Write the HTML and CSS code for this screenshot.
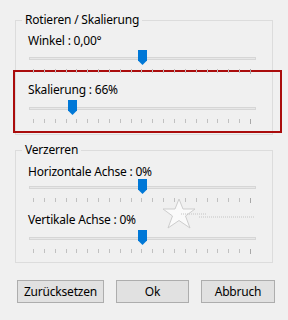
FILE: index.html
```html
<!DOCTYPE html>
<html lang="de">
<head>
  <meta charset="UTF-8">
  <title>Rotieren / Skalierung</title>
  <link rel="stylesheet" href="styles.css">
</head>
<body>
  <div class="dialog">
    <fieldset class="group">
      <legend>Rotieren / Skalierung</legend>
      <div class="label first">Winkel : 0,00°</div>
      <div class="slider s-tight">
        <div class="track"></div>
        <div class="thumb" style="left: 113px"></div>
        <div class="ticks"><i></i><i></i><i></i><i></i><i></i><i></i><i></i><i></i><i></i><i></i><i></i><i></i><i></i><i></i><i></i><i></i><i></i><i></i><i></i><i></i><i></i></div>
      </div>

      <!-- markierter Bereich -->
      <div class="focus">
        <div class="label">Skalierung : 66%</div>
        <div class="slider s-focus">
          <div class="track"></div>
          <div class="thumb" style="left: 43px"></div>
          <div class="ticks"><i></i><i></i><i></i><i></i><i></i><i></i><i></i><i></i><i></i><i></i><i></i><i></i><i></i><i></i><i></i><i></i><i></i><i></i><i></i><i></i><i></i></div>
        </div>
      </div>
    </fieldset>

    <fieldset class="group second">
      <legend>Verzerren</legend>
      <div class="label h-label">Horizontale Achse : 0%</div>
      <div class="slider s-h">
        <div class="track"></div>
        <div class="thumb" style="left: 113px"></div>
        <div class="ticks"><i></i><i></i><i></i><i></i><i></i><i></i><i></i><i></i><i></i><i></i><i></i><i></i><i></i><i></i><i></i><i></i><i></i><i></i><i></i><i></i><i></i></div>
      </div>
      <div class="label v-label">Vertikale Achse : 0%</div>
      <div class="slider s-v">
        <div class="track"></div>
        <div class="thumb" style="left: 113px"></div>
        <div class="ticks"><i></i><i></i><i></i><i></i><i></i><i></i><i></i><i></i><i></i><i></i><i></i><i></i><i></i><i></i><i></i><i></i><i></i><i></i><i></i><i></i><i></i></div>
      </div>

      <!-- Wasserzeichen -->
      <svg class="watermark" width="100" height="36" viewBox="0 0 100 36">
        <polygon points="18,2 22,12 34,12 24.5,19 29,31 18,23.5 7,31 11.5,19 2,12 14,12" fill="#fafafa" stroke="#cdcdcd" stroke-width="1"/>
        <line x1="20" y1="17" x2="46" y2="17" stroke="#c4c4c4" stroke-width="1" stroke-dasharray="1 1"/>
        <line x1="38" y1="20" x2="94" y2="20" stroke="#c4c4c4" stroke-width="1" stroke-dasharray="1 1"/>
      </svg>
    </fieldset>

    <div class="buttons">
      <button class="btn b-reset">Zurücksetzen</button>
      <button class="btn b-ok">Ok</button>
      <button class="btn b-cancel">Abbruch</button>
    </div>
  </div>
</body>
</html>
```

FILE: styles.css
```css
body {
  margin: 0;
  background-color: #f0f0f0;
  font-family: "Noto Sans", "Open Sans", sans-serif;
  font-size: 12px;
  letter-spacing: -0.2px;
  color: #000;
}
.dialog {
  width: 288px;
  height: 320px;
}
.group {
  margin: 13px 15px 0 15px;
  width: 256px;
  padding: 0 0 1px 0;
  border: 1px solid #dcdcdc;
  min-width: 0;
}
.group legend {
  margin-left: 6px;
  padding: 0 3px;
  line-height: 14px;
}
.second {
  margin-top: 8px;
  padding-bottom: 8px;
  position: relative;
}
.label {
  line-height: 16px;
  padding-left: 12px;
  white-space: nowrap;
}
.first {
  margin-top: 6px;
}
.slider {
  position: relative;
  width: 227px;
  height: 24px;
  margin-left: 13px;
}
.s-tight {
  margin-top: 1px;
}
.track {
  position: absolute;
  left: 0;
  right: 0;
  top: 7px;
  height: 3px;
  background-color: #e7e7e7;
  border: 1px solid #d6d6d6;
  box-sizing: border-box;
}
.thumb {
  position: absolute;
  top: 0;
  width: 9px;
  height: 15px;
  margin-left: -4px;
  background-color: #0078d7;
  clip-path: polygon(0 0, 100% 0, 100% 70%, 50% 100%, 0 70%);
}
.ticks {
  position: absolute;
  left: 4px;
  right: 5px;
  top: 19px;
  display: flex;
  justify-content: space-between;
}
.ticks i {
  display: block;
  width: 1px;
  height: 4px;
  background-color: #c0c0c0;
}
.ticks i:last-child {
  height: 5px;
  background-color: #a8a8a8;
}
.focus {
  margin: -4px -10px 0 -3px;
  border: 2px solid #aa0c0c;
  padding: 10px 0 7px 0;
}
.focus .label {
  padding-left: 13px;
}
.focus .slider {
  margin-left: 14px;
  margin-top: 2px;
}
.h-label {
  margin-top: 7px;
}
.s-h {
  margin-top: -1px;
}
.v-label {
  margin-top: 9px;
}
.s-v {
  margin-top: 2px;
}
.watermark {
  position: absolute;
  left: 145px;
  top: 40px;
}
.buttons {
  display: flex;
  gap: 12px;
  padding-left: 17px;
  margin-top: 17px;
}
.btn {
  height: 23px;
  padding: 0;
  background-color: #e1e1e1;
  border: 1px solid #adadad;
  font-family: inherit;
  font-size: 12px;
  letter-spacing: inherit;
  color: #000;
}
.b-reset {
  width: 87px;
}
.b-ok {
  width: 73px;
}
.b-cancel {
  width: 74px;
}
```
